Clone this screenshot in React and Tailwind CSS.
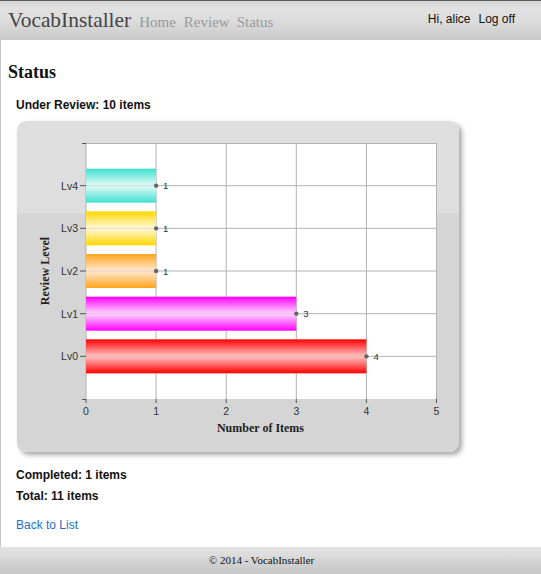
import React from "react";

const bars = [
  { label: "Lv4", v: 1, c: "#3fe0cf", light: "#dcfaf6" },
  { label: "Lv3", v: 1, c: "#ffd700", light: "#fff7cf" },
  { label: "Lv2", v: 1, c: "#ffa41c", light: "#ffe6c8" },
  { label: "Lv1", v: 3, c: "#ff00ff", light: "#ffcaff" },
  { label: "Lv0", v: 4, c: "#ff0000", light: "#ffbaba" },
];

const PX0 = 69;
const PX1 = 419.5;
const PY0 = 22;
const PY1 = 278;
const UNIT = (PX1 - PX0) / 5;
const BAND = (PY1 - PY0) / 6;

function Chart() {
  return (
    <svg width="442" height="331" className="block" style={{ fontFamily: '"Liberation Sans", Arial, sans-serif' }}>
      <defs>
        {bars.map((b, i) => (
          <linearGradient key={i} id={`g${i}`} x1="0" y1="0" x2="0" y2="1">
            <stop offset="0" stopColor={b.c} />
            <stop offset="0.47" stopColor={b.light} />
            <stop offset="0.53" stopColor={b.light} />
            <stop offset="1" stopColor={b.c} />
          </linearGradient>
        ))}
      </defs>
      <rect x={PX0} y={PY0} width={PX1 - PX0} height={PY1 - PY0} fill="#ffffff" />
      {[0, 1, 2, 3, 4, 5].map((k) => (
        <line key={"v" + k} x1={PX0 + k * UNIT} x2={PX0 + k * UNIT} y1={PY0} y2={PY1} stroke="#b2b2b2" strokeWidth="1" />
      ))}
      <line x1={PX0} x2={PX1} y1={PY0 + 0.5} y2={PY0 + 0.5} stroke="#b2b2b2" strokeWidth="1" />
      {bars.map((b, i) => {
        const cy = PY0 + BAND * (i + 1);
        return (
          <line key={"h" + i} x1={PX0} x2={PX1} y1={cy} y2={cy} stroke="#b2b2b2" strokeWidth="1" />
        );
      })}
      {bars.map((b, i) => {
        const cy = PY0 + BAND * (i + 1);
        const w = b.v * UNIT;
        return (
          <g key={"b" + i}>
            <rect x={PX0} y={cy - 17} width={w} height={34} fill={`url(#g${i})`} />
            <line x1={PX0} x2={PX0 + w} y1={cy} y2={cy} stroke="#b2b2b2" strokeOpacity="0.35" strokeWidth="1" />
            <circle cx={PX0 + w} cy={cy} r="2.2" fill="#666" />
            <text x={PX0 + w + 7} y={cy + 3.5} fontSize="9.5" fill="#333">{b.v}</text>
            <text x={PX0 - 8} y={cy + 4} fontSize="10.5" fill="#333" textAnchor="end">{b.label}</text>
            <line x1={PX0 - 6} x2={PX0} y1={cy} y2={cy} stroke="#555" strokeWidth="1" />
          </g>
        );
      })}
      <line x1={PX0 - 4} x2={PX0} y1={PY0 + 0.5} y2={PY0 + 0.5} stroke="#555" strokeWidth="1" />
      <line x1={PX0 - 4} x2={PX0} y1={PY1 + 0.5} y2={PY1 + 0.5} stroke="#555" strokeWidth="1" />
      {[0, 1, 2, 3, 4, 5].map((k) => (
        <g key={"t" + k}>
          <line x1={PX0 + k * UNIT} x2={PX0 + k * UNIT} y1={PY1} y2={PY1 + 4} stroke="#555" strokeWidth="1" />
          <text x={PX0 + k * UNIT} y={PY1 + 16} fontSize="10.5" fill="#333" textAnchor="middle">{k}</text>
        </g>
      ))}
      <text
        x="243.5"
        y="311"
        fontSize="12"
        fontWeight="bold"
        textAnchor="middle"
        fill="#222"
        style={{ fontFamily: '"Liberation Serif", "Times New Roman", serif' }}
      >
        Number of Items
      </text>
      <text
        x="0"
        y="0"
        fontSize="12"
        fontWeight="bold"
        textAnchor="middle"
        fill="#222"
        transform={`translate(32 ${(PY0 + PY1) / 2}) rotate(-90)`}
        style={{ fontFamily: '"Liberation Serif", "Times New Roman", serif' }}
      >
        Review Level
      </text>
    </svg>
  );
}

export default function App() {
  return (
    <div className="min-h-screen flex flex-col bg-white text-[#111]" style={{ fontFamily: '"Liberation Sans", Arial, sans-serif' }}>
      <header className="h-[40px] border-t border-[#5a5a5a] bg-[linear-gradient(to_bottom,#d6d6d6_0px,#e1e1e1_6px,#dedede_18px,#d2d2d2_30px,#c8c8c8_39px)] flex justify-between">
        <div className="flex items-baseline pl-[8px] pt-[7px] font-['Liberation_Serif',serif]">
          <span className="text-[21.4px] leading-[24px] text-[#444]">VocabInstaller</span>
          <span className="ml-[8px] text-[15px] text-[#999]">Home</span>
          <span className="ml-[8px] text-[15px] text-[#999]">Review</span>
          <span className="ml-[7px] text-[15px] text-[#999]">Status</span>
        </div>
        <div className="flex items-start pt-[11px] pr-[26px] text-[12px] leading-[14px] text-[#111]">
          <span>Hi, alice</span>
          <span className="ml-[8px]">Log off</span>
        </div>
      </header>
      <main className="flex-1 border-l border-[#c8c8c8] pb-[14px]">
        <h2 className="pl-[7px] pt-[22px] text-[18px] leading-[21px] font-bold font-['Liberation_Serif',serif]">Status</h2>
        <p className="pl-[15px] mt-[15px] text-[12px] leading-[15px] font-bold">Under Review: 10 items</p>
        <div className="ml-[16px] mt-[8px] w-[442px] h-[331px] rounded-[9px] bg-[linear-gradient(to_bottom,#dedede_0px,#dedede_92px,#d5d5d5_93px,#d5d5d5_100%)] shadow-[3px_3px_5px_rgba(0,0,0,0.35)]">
          <Chart />
        </div>
        <p className="pl-[15px] mt-[16px] text-[12px] leading-[15px] font-bold">Completed: 1 items</p>
        <p className="pl-[15px] mt-[6px] text-[12px] leading-[15px] font-bold">Total: 11 items</p>
        <p className="pl-[15px] mt-[14px] text-[12px] leading-[15px] text-[#1f6fc5]">Back to List</p>
      </main>
      <footer className="h-[27px] bg-[linear-gradient(to_bottom,#e2e2e2_0px,#dcdcdc_8px,#d2d2d2_16px,#c6c6c6_27px)] flex items-center justify-center pr-[18px]">
        <span className="text-[11px] leading-[13px] text-[#111] font-['Liberation_Serif',serif]">© 2014 - VocabInstaller</span>
      </footer>
    </div>
  );
}
